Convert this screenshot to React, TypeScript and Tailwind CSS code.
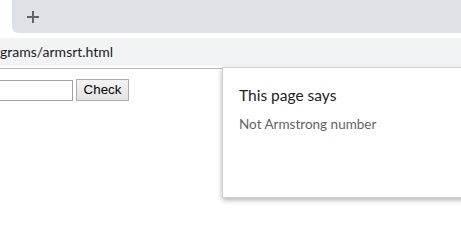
import React from "react"

export default function App() {
  return (
    <div className="relative w-[461px] h-[242px] overflow-hidden bg-white font-['Lato',sans-serif]">
      {/* tab strip */}
      <div className="flex h-[33px]">
        <div className="w-[12px] bg-white" />
        <div className="flex flex-1 items-center rounded-bl-[6px] bg-[#dee1e6]">
          <svg className="ml-[15px]" width="12" height="12" viewBox="0 0 12 12" fill="none">
            <path d="M6 0v12M0 6h12" stroke="#5f6368" strokeWidth="2" />
          </svg>
        </div>
      </div>

      {/* toolbar */}
      <div className="h-[36px] border-b border-[#b5b5b5] bg-white pt-[5px]">
        <div className="h-[28px] bg-[#f1f3f4] text-[14px] leading-[28px] text-[#202124] whitespace-nowrap">
          grams/armsrt.html
        </div>
      </div>

      {/* page */}
      <div className="flex items-center gap-[3px] pt-[10px] font-['Liberation_Sans',Arial,sans-serif]">
        <input
          type="text"
          className="-ml-[101px] h-[21px] w-[174px] border border-[#a3a3a3] bg-white outline-none"
        />
        <button className="h-[22px] w-[53px] border border-[#adadad] bg-gradient-to-b from-[#f3f3f3] to-[#e3e3e3] text-[13.33px] leading-[20px] text-black">
          Check
        </button>
      </div>

      {/* alert dialog */}
      <div className="absolute left-[222px] top-[67px] h-[131px] w-[260px] border border-[#cfcfcf] bg-white pl-[16px] pt-[15px] shadow-[0_2px_5px_rgba(0,0,0,0.3)]">
        <div className="text-[15.5px] leading-6 text-[#202124]">This page says</div>
        <div className="mt-[7px] text-[13.5px] leading-5 text-[#5f6368]">Not Armstrong number</div>
      </div>
    </div>
  )
}
